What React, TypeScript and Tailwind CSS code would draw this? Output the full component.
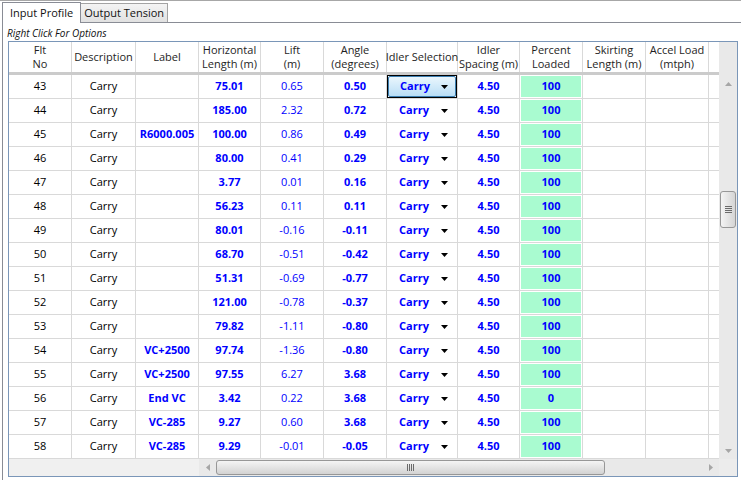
import React from "react";

type Row = { no: number; label: string; len: string; lift: string; angle: string; pct: string };

const rows: Row[] = [
  { no: 43, label: "", len: "75.01", lift: "0.65", angle: "0.50", pct: "100" },
  { no: 44, label: "", len: "185.00", lift: "2.32", angle: "0.72", pct: "100" },
  { no: 45, label: "R6000.005", len: "100.00", lift: "0.86", angle: "0.49", pct: "100" },
  { no: 46, label: "", len: "80.00", lift: "0.41", angle: "0.29", pct: "100" },
  { no: 47, label: "", len: "3.77", lift: "0.01", angle: "0.16", pct: "100" },
  { no: 48, label: "", len: "56.23", lift: "0.11", angle: "0.11", pct: "100" },
  { no: 49, label: "", len: "80.01", lift: "-0.16", angle: "-0.11", pct: "100" },
  { no: 50, label: "", len: "68.70", lift: "-0.51", angle: "-0.42", pct: "100" },
  { no: 51, label: "", len: "51.31", lift: "-0.69", angle: "-0.77", pct: "100" },
  { no: 52, label: "", len: "121.00", lift: "-0.78", angle: "-0.37", pct: "100" },
  { no: 53, label: "", len: "79.82", lift: "-1.11", angle: "-0.80", pct: "100" },
  { no: 54, label: "VC+2500", len: "97.74", lift: "-1.36", angle: "-0.80", pct: "100" },
  { no: 55, label: "VC+2500", len: "97.55", lift: "6.27", angle: "3.68", pct: "100" },
  { no: 56, label: "End VC", len: "3.42", lift: "0.22", angle: "3.68", pct: "0" },
  { no: 57, label: "VC-285", len: "9.27", lift: "0.60", angle: "3.68", pct: "100" },
  { no: 58, label: "VC-285", len: "9.29", lift: "-0.01", angle: "-0.05", pct: "100" },
];

const headers: { w: string; lines: string[] }[] = [
  { w: "w-[63px]", lines: ["Flt", "No"] },
  { w: "w-[64px]", lines: ["Description"] },
  { w: "w-[63px]", lines: ["Label"] },
  { w: "w-[62px]", lines: ["Horizontal", "Length (m)"] },
  { w: "w-[63px]", lines: ["Lift", "(m)"] },
  { w: "w-[63px]", lines: ["Angle", "(degrees)"] },
  { w: "w-[71px]", lines: ["Idler Selection"] },
  { w: "w-[62px]", lines: ["Idler", "Spacing (m)"] },
  { w: "w-[63px]", lines: ["Percent", "Loaded"] },
  { w: "w-[63px]", lines: ["Skirting", "Length (m)"] },
  { w: "w-[63px]", lines: ["Accel Load", "(mtph)"] },
];

const cell = "h-full flex items-center justify-center border-r border-[#d9d9d9] shrink-0";
const blue = "text-[#0000ff] font-bold";

const DropArrow = () => (
  <svg width="7" height="4" viewBox="0 0 7 4" className="shrink-0">
    <polygon points="0,0 7,0 3.5,4" fill="#000" />
  </svg>
);

const ArrowGlyph = ({ dir }: { dir: "up" | "down" | "left" | "right" }) => {
  const pts = {
    up: "0,4 7,4 3.5,0",
    down: "0,0 7,0 3.5,4",
    left: "4,0 4,7 0,3.5",
    right: "0,0 0,7 4,3.5",
  }[dir];
  const size = dir === "up" || dir === "down" ? { w: 7, h: 4 } : { w: 4, h: 7 };
  return (
    <svg width={size.w} height={size.h} viewBox={`0 0 ${size.w} ${size.h}`}>
      <polygon points={pts} fill="#a6a6a6" />
    </svg>
  );
};

const App: React.FC = () => {
  return (
    <div
      className="w-[741px] h-[480px] bg-white border-t border-[#a7a7a7] text-[11px] text-black overflow-hidden"
      style={{ fontFamily: '"Open Sans", "Noto Sans", sans-serif' }}
    >
      {/* tab strip */}
      <div className="flex items-end h-[21px] pl-[2px]">
        <div className="relative z-10 h-[21px] -mb-px px-[7px] flex items-center bg-white border border-b-0 border-[#898c95] text-[#111]">
          Input Profile
        </div>
        <div className="h-[19px] px-[3px] flex items-center border border-b-0 border-l-0 border-[#a3a3a3] bg-gradient-to-b from-[#f4f4f4] to-[#e1e1e1] text-[#111]">
          Output Tension
        </div>
      </div>

      {/* tab panel */}
      <div className="ml-[2px] border-l border-t border-[#898c95] pl-[5px] h-[460px]">
        <div className="h-[18px] pt-[3px] -ml-px italic text-[10px] leading-[14px] text-[#111]">Right Click For Options</div>

        <div className="w-[730px] h-[436px] border border-[#7a96b8] flex flex-col">
          <div className="flex h-[417px]">
            {/* table */}
            <div className="w-[710px] overflow-hidden flex flex-col">
              {/* header */}
              <div className="flex h-[30px] shrink-0 text-[#1e1e1e] leading-[14px]">
                {headers.map((h, i) => (
                  <div key={i} className={`${cell} ${h.w} flex-col`}>
                    {h.lines.map((l) => (
                      <span key={l} className="whitespace-nowrap">
                        {l}
                      </span>
                    ))}
                  </div>
                ))}
                <div className="w-[10px] shrink-0" />
              </div>
              <div className="h-[3px] bg-[#cbcbcb] shrink-0" />

              {rows.map((r) => (
                <div key={r.no} className="flex h-[24px] shrink-0 border-b border-[#d9d9d9]">
                  <div className={`${cell} w-[63px]`}>{r.no}</div>
                  <div className={`${cell} w-[64px]`}>Carry</div>
                  <div className={`${cell} w-[63px] ${blue}`}>{r.label}</div>
                  <div className={`${cell} w-[62px] ${blue}`}>{r.len}</div>
                  <div className={`${cell} w-[63px] text-[#0000ff]`}>{r.lift}</div>
                  <div className={`${cell} w-[63px] ${blue}`}>{r.angle}</div>
                  <div className={`${cell} w-[71px]`}>
                    {r.no === 43 ? (
                      <div className="w-full h-full border border-black">
                        <div className="w-full h-full flex items-center border border-[#3c7fb1] rounded-[2px] bg-gradient-to-b from-[#eaf6fd] to-[#b9def6]">
                          <span className={`w-[52px] text-center ${blue}`}>Carry</span>
                          <DropArrow />
                        </div>
                      </div>
                    ) : (
                      <div className="w-full h-full flex items-center">
                        <span className={`w-[54px] text-center ${blue}`}>Carry</span>
                        <DropArrow />
                      </div>
                    )}
                  </div>
                  <div className={`${cell} w-[62px] ${blue}`}>4.50</div>
                  <div className={`${cell} w-[63px]`}>
                    <div className={`m-px w-full h-[21px] flex items-center justify-center bg-[#a9fbd0] ${blue}`}>
                      {r.pct}
                    </div>
                  </div>
                  <div className={`${cell} w-[63px]`} />
                  <div className={`${cell} w-[63px]`} />
                  <div className="w-[10px] shrink-0" />
                </div>
              ))}
            </div>

            {/* vertical scrollbar */}
            <div className="w-[18px] shrink-0 bg-[#e9e9e9] flex flex-col">
              <div className="h-[33px] shrink-0" />
              <div className="h-[17px] shrink-0 flex items-center justify-center">
                <ArrowGlyph dir="up" />
              </div>
              <div className="h-[99px] shrink-0" />
              <div className="h-[37px] shrink-0 mx-px rounded-[3px] border border-[#979797] bg-gradient-to-r from-[#f4f4f4] to-[#d5d5d5] flex flex-col items-center justify-center gap-[1px]">
                <div className="w-[7px] h-px bg-[#6a6a6a]" />
                <div className="w-[7px] h-px bg-[#6a6a6a]" />
                <div className="w-[7px] h-px bg-[#6a6a6a]" />
                <div className="w-[7px] h-px bg-[#6a6a6a]" />
              </div>
              <div className="flex-1" />
              <div className="h-[17px] shrink-0 flex items-center justify-center">
                <ArrowGlyph dir="down" />
              </div>
            </div>
          </div>

          {/* horizontal scrollbar row */}
          <div className="flex h-[17px] shrink-0 bg-[#f0f0f0]">
            <div className="w-[190px] shrink-0" />
            <div className="w-[520px] shrink-0 flex bg-[#e9e9e9]">
              <div className="w-[17px] flex items-center justify-center">
                <ArrowGlyph dir="left" />
              </div>
              <div className="w-[389px] my-px rounded-[3px] border border-[#979797] bg-gradient-to-b from-[#f4f4f4] to-[#d3d3d3] flex items-center justify-center gap-[1px]">
                <div className="w-px h-[7px] bg-[#6a6a6a]" />
                <div className="w-px h-[7px] bg-[#6a6a6a]" />
                <div className="w-px h-[7px] bg-[#6a6a6a]" />
                <div className="w-px h-[7px] bg-[#6a6a6a]" />
              </div>
              <div className="flex-1" />
              <div className="w-[17px] flex items-center justify-center">
                <ArrowGlyph dir="right" />
              </div>
            </div>
            <div className="w-[18px] shrink-0 bg-[#ececec]" />
          </div>
        </div>
      </div>
    </div>
  );
};

export default App;
